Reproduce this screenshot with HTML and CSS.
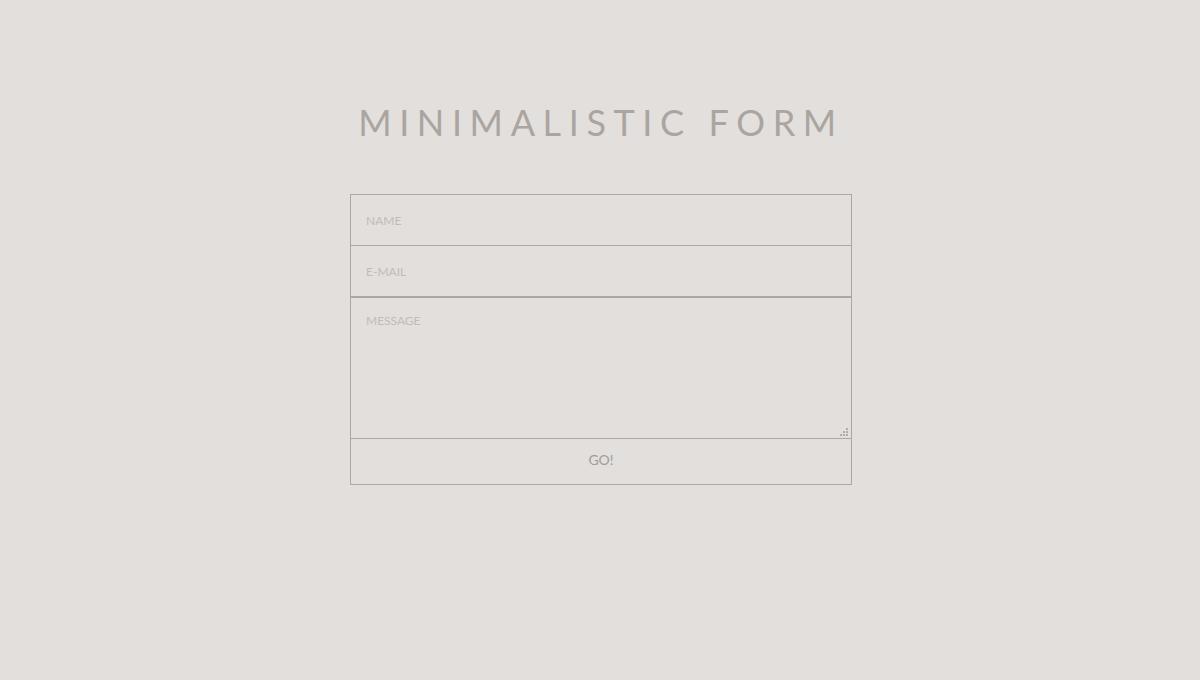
FILE: index.html
```html
<!DOCTYPE html>
<html lang="en">
  <head>
    <meta charset="UTF-8" />
    <meta name="viewport" content="width=device-width, initial-scale=1.0" />
    <title>Minimalistic Form</title>
    <link rel="stylesheet" href="styles.css">
  </head>
  <body>
    <div class="container">
      <h1>Minimalistic Form</h1>

      <form class="contact-form">
        <input type="text" name="name" placeholder="NAME" />
        <input type="email" name="email" placeholder="E-MAIL" class="email" />
        <textarea name="message" placeholder="MESSAGE"></textarea>
        <button type="submit">GO!</button>
      </form>
    </div>
  </body>
</html>
```

FILE: styles.css
```css
* {
  margin: 0;
  padding: 0;
  box-sizing: border-box;
  font-family: Lato, sans-serif;
}

body {
  min-height: 100vh;
  background-color: #e3dfdc;
}

.container {
  display: flex;
  flex-direction: column;
  align-items: center;
  padding-top: 100px;
  padding-left: 2px;
}

h1 {
  font-size: 36px;
  font-weight: 400;
  color: #aaa5a1;
  text-transform: uppercase;
  letter-spacing: 7.6px;
  line-height: 44px;
  margin-bottom: 50px;
}

.contact-form {
  width: 502px;
  display: flex;
  flex-direction: column;
}

input,
textarea,
button {
  width: 100%;
  background: transparent;
  border: 1px solid #aaa7a4;
  color: #a19d9a;
  font-size: 12px;
  outline: none;
}

input {
  height: 52px;
  padding: 0 15px;
}

input.email {
  border-top: none;
  height: 51px;
}

input::placeholder,
textarea::placeholder {
  color: #c0bcb8;
}

textarea {
  height: 142px;
  padding: 15px 15px;
  resize: vertical;
  display: block;
}

/* little dotted grip in the corner */
textarea::-webkit-resizer {
  background:
    linear-gradient(#b0aca9, #b0aca9) 10px 5px / 2px 2px no-repeat,
    linear-gradient(#b0aca9, #b0aca9) 7px 8px / 2px 2px no-repeat,
    linear-gradient(#b0aca9, #b0aca9) 10px 8px / 2px 2px no-repeat,
    linear-gradient(#b0aca9, #b0aca9) 4px 11px / 2px 2px no-repeat,
    linear-gradient(#b0aca9, #b0aca9) 7px 11px / 2px 2px no-repeat,
    linear-gradient(#b0aca9, #b0aca9) 10px 11px / 2px 2px no-repeat;
}

button {
  height: 46px;
  border-top: none;
  font-size: 14px;
  line-height: 40px;
  padding-bottom: 4px;
  cursor: pointer;
}
```
